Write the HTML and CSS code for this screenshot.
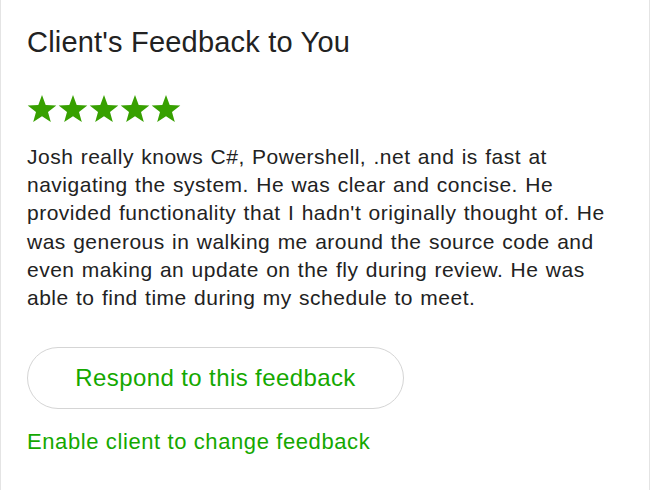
FILE: index.html
```html
<!DOCTYPE html>
<html lang="en">
<head>
<meta charset="UTF-8">
<meta name="viewport" content="width=device-width, initial-scale=1.0">
<title>Client's Feedback</title>
<link rel="stylesheet" href="styles.css">
</head>
<body>

<div class="card">
  <h2>Client's Feedback to You</h2>

  <div class="stars">
    <svg viewBox="0 0 30 30"><path d="M15 1L18.7 10.9 29.3 11.4 21 18 23.8 28.1 15 22.3 6.2 28.1 9 18 .7 11.4 11.3 10.9z"/></svg>
    <svg viewBox="0 0 30 30"><path d="M15 1L18.7 10.9 29.3 11.4 21 18 23.8 28.1 15 22.3 6.2 28.1 9 18 .7 11.4 11.3 10.9z"/></svg>
    <svg viewBox="0 0 30 30"><path d="M15 1L18.7 10.9 29.3 11.4 21 18 23.8 28.1 15 22.3 6.2 28.1 9 18 .7 11.4 11.3 10.9z"/></svg>
    <svg viewBox="0 0 30 30"><path d="M15 1L18.7 10.9 29.3 11.4 21 18 23.8 28.1 15 22.3 6.2 28.1 9 18 .7 11.4 11.3 10.9z"/></svg>
    <svg viewBox="0 0 30 30"><path d="M15 1L18.7 10.9 29.3 11.4 21 18 23.8 28.1 15 22.3 6.2 28.1 9 18 .7 11.4 11.3 10.9z"/></svg>
  </div>

  <p class="comment">Josh really knows C#, Powershell, .net and is fast at navigating the system. He was clear and concise. He provided functionality that I hadn't originally thought of. He was generous in walking me around the source code and even making an update on the fly during review. He was able to find time during my schedule to meet.</p>

  <button type="button" class="respond-btn">Respond to this feedback</button>

  <a href="#" class="link">Enable client to change feedback</a>
</div>

</body>
</html>
```

FILE: styles.css
```css
body {
  font-family: "Liberation Sans", Arial, sans-serif;
  margin: 0;
  padding: 0;
  background-color: #fff;
  color: #222;
}

.card {
  width: 597px;
  height: 490px;
  padding: 0 25px 0 26px;
  border-left: 1px solid #e4e4e4;
  border-right: 1px solid #e4e4e4;
  box-sizing: content-box;
}

h2 {
  font-size: 29px;
  font-weight: normal;
  letter-spacing: 0.2px;
  margin: 0;
  padding-top: 26px;
  line-height: 32px;
}

.stars {
  display: flex;
  gap: 1px;
  margin-top: 36px;
}

.stars svg {
  width: 30px;
  height: 30px;
  fill: #37a000;
}

.comment {
  font-size: 21px;
  letter-spacing: 0.5px;
  word-spacing: 1px;
  line-height: 28.2px;
  margin: 19px 0 0;
}

.respond-btn {
  display: block;
  width: 377px;
  height: 62px;
  margin-top: 35px;
  background-color: #fff;
  border: 1px solid #d5d5d5;
  border-radius: 31px;
  color: #14a800;
  font-family: inherit;
  font-size: 24px;
  letter-spacing: 0.4px;
  cursor: pointer;
}

.link {
  display: inline-block;
  margin-top: 20px;
  color: #14a800;
  font-size: 22px;
  letter-spacing: 0.6px;
  text-decoration: none;
}
```
